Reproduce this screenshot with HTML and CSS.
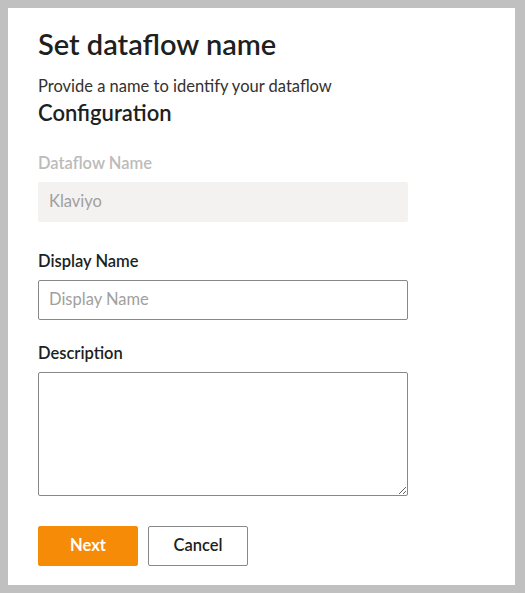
FILE: index.html
```html
<!DOCTYPE html>
<html lang="en">
<head>
<meta charset="utf-8">
<title>Set dataflow name</title>
<link rel="stylesheet" href="styles.css">
</head>
<body>
<main class="panel">
  <h1 class="title">Set dataflow name</h1>
  <p class="subtitle">Provide a name to identify your dataflow</p>
  <h2 class="section">Configuration</h2>

  <div class="field field-first">
    <label class="label label-disabled" for="dfname">Dataflow Name</label>
    <input id="dfname" class="input input-disabled" type="text" value="Klaviyo" disabled>
  </div>

  <div class="field field-second">
    <label class="label" for="dispname">Display Name</label>
    <input id="dispname" class="input" type="text" placeholder="Display Name">
  </div>

  <div class="field field-third">
    <label class="label" for="desc">Description</label>
    <textarea id="desc" class="textarea"></textarea>
  </div>

  <div class="actions">
    <button class="btn btn-primary" type="button">Next</button>
    <button class="btn btn-default" type="button">Cancel</button>
  </div>
</main>
</body>
</html>
```

FILE: styles.css
```css
html, body {
  height: 100%;
}
body {
  margin: 0;
  padding: 8px 10px 8px 8px;
  box-sizing: border-box;
  background: #c0c0c0;
  font-family: Lato, "Liberation Sans", sans-serif;
  color: #323130;
}
.panel {
  background: #ffffff;
  height: 577px;
  box-sizing: border-box;
  padding: 18px 30px 0 30px;
  display: flex;
  flex-direction: column;
}
.title {
  margin: 0;
  font-size: 29px;
  line-height: 36px;
  font-weight: 600;
  color: #201f1e;
}
.subtitle {
  margin: 13px 0 0 0;
  font-size: 16.5px;
  line-height: 22px;
  color: #323130;
}
.section {
  margin: 2px 0 0 0;
  font-size: 22px;
  line-height: 28px;
  font-weight: 600;
  color: #201f1e;
}
.field {
  display: flex;
  flex-direction: column;
  width: 370px;
}
.field-first { margin-top: 25px; }
.field-second { margin-top: 28px; }
.field-third { margin-top: 22px; }
.label {
  font-size: 16.5px;
  line-height: 22px;
  font-weight: 600;
  color: #201f1e;
  margin-bottom: 8px;
}
.label-disabled {
  color: #bdbbb9;
}
.input {
  height: 40px;
  box-sizing: border-box;
  border: 1px solid #8a8886;
  border-radius: 2px;
  padding: 0 10px 2px 10px;
  font-family: inherit;
  font-size: 16.5px;
  color: #323130;
  background: #ffffff;
  outline: none;
}
.input::placeholder {
  color: #a19f9d;
}
.input-disabled {
  background: #f3f2f1;
  border-color: #f3f2f1;
  color: #a19f9d;
}
.textarea {
  height: 124px;
  box-sizing: border-box;
  border: 1px solid #8a8886;
  border-radius: 2px;
  padding: 6px 10px;
  font-family: inherit;
  font-size: 16.5px;
  outline: none;
}
.actions {
  margin-top: 30px;
  display: flex;
  gap: 10px;
}
.btn {
  width: 100px;
  height: 40px;
  box-sizing: border-box;
  border-radius: 2px;
  padding: 0 0 3px 0;
  font-family: inherit;
  font-size: 16.5px;
  font-weight: 600;
  cursor: pointer;
}
.btn-primary {
  background: #f68b07;
  border: 1px solid #f68b07;
  color: #ffffff;
  font-weight: 700;
}
.btn-default {
  background: #ffffff;
  border: 1px solid #8a8886;
  color: #201f1e;
}
```
